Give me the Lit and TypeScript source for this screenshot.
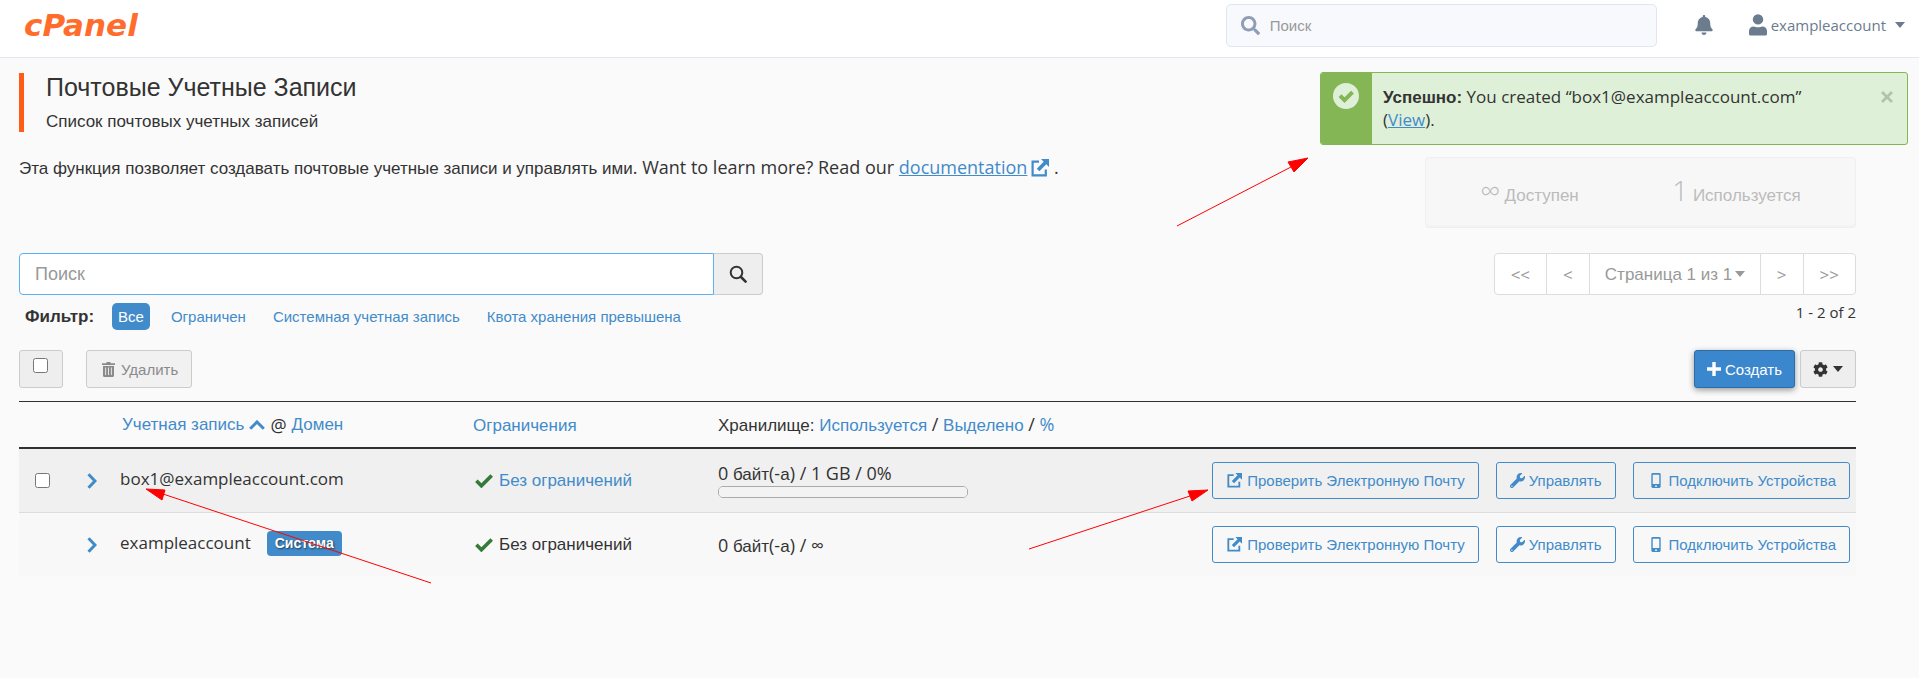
import { LitElement, html, css, svg, nothing, TemplateResult } from "lit";
import { customElement, property } from "lit/decorators.js";

interface Glyph {
  box: string;
  body: TemplateResult;
}

const solid = (box: string, d: string): Glyph => ({ box, body: svg`<path fill="currentColor" fill-rule="evenodd" d=${d} />` });

const GLYPHS: Record<string, Glyph> = {
  search: solid(
    "0 0 512 512",
    "M505 442.7L405.3 343c-4.5-4.5-10.6-7-17-7H372c27.6-35.3 44-79.7 44-128C416 93.1 322.9 0 208 0S0 93.1 0 208s93.1 208 208 208c48.3 0 92.7-16.4 128-44v16.3c0 6.4 2.5 12.5 7 17l99.7 99.7c9.4 9.4 24.6 9.4 33.9 0l28.3-28.3c9.4-9.4 9.4-24.6.1-34zM208 336c-70.7 0-128-57.2-128-128 0-70.7 57.2-128 128-128 70.7 0 128 57.2 128 128 0 70.7-57.2 128-128 128z"
  ),
  lens: {
    box: "0 0 18 18",
    body: svg`<circle cx="7.5" cy="7.5" r="5.8" fill="none" stroke="currentColor" stroke-width="2" /><path d="M12 12l4.6 4.6" stroke="currentColor" stroke-width="2.6" stroke-linecap="round" />`,
  },
  bell: solid(
    "0 0 448 512",
    "M224 512c35.32 0 63.97-28.65 63.97-64H160.03c0 35.35 28.65 64 63.97 64zm215.39-149.71c-19.32-20.76-55.47-51.99-55.47-154.29 0-77.7-54.48-139.9-127.94-155.16V32c0-17.67-14.32-32-31.98-32s-31.98 14.33-31.98 32v20.84C118.56 68.1 64.08 130.3 64.08 208c0 102.3-36.15 133.53-55.47 154.29-6 6.45-8.66 14.16-8.61 21.71.11 16.4 12.98 32 32.1 32h383.8c19.12 0 32-15.6 32.1-32 .05-7.55-2.61-15.27-8.61-21.71z"
  ),
  user: {
    box: "0 0 18 22",
    body: svg`<circle cx="9" cy="5.4" r="5.2" fill="currentColor" /><path fill="currentColor" d="M0 20V17a4.6 4.6 0 0 1 4.6-4.6c1.4 0 2.4.8 4.4.8s3-.8 4.4-.8A4.6 4.6 0 0 1 18 17v3a1.5 1.5 0 0 1-1.5 1.5h-15A1.5 1.5 0 0 1 0 20z" />`,
  },
  wrench: solid(
    "0 0 512 512",
    "M507.73 109.1c-2.24-9.03-13.54-12.09-20.12-5.51l-74.36 74.36-67.88-11.31-11.31-67.88 74.36-74.36c6.62-6.62 3.43-17.9-5.66-20.16-47.38-11.74-99.55.91-136.58 37.93-39.64 39.64-50.55 97.1-34.05 147.2L18.74 402.76c-24.99 24.99-24.99 65.51 0 90.5 24.99 24.99 65.51 24.99 90.5 0l213.21-213.21c50.12 16.71 107.47 5.68 147.37-34.22 37.07-37.07 49.7-89.32 37.91-136.73zM64 472c-13.25 0-24-10.75-24-24 0-13.26 10.75-24 24-24s24 10.74 24 24c0 13.25-10.75 24-24 24z"
  ),
  cog: solid(
    "0 0 512 512",
    "M487.4 315.7l-42.6-24.6c4.3-23.2 4.3-47 0-70.2l42.6-24.6c4.9-2.8 7.1-8.6 5.5-14-11.1-35.6-30-67.8-54.7-94.6-3.8-4.1-10-5.1-14.8-2.3L380.8 110c-17.9-15.4-38.5-27.3-60.8-35.1V25.8c0-5.6-3.9-10.5-9.4-11.7-36.7-8.2-74.3-7.8-109.2 0-5.5 1.2-9.4 6.1-9.4 11.7V75c-22.2 7.9-42.8 19.8-60.8 35.1L88.7 85.5c-4.9-2.8-11-1.9-14.8 2.3-24.7 26.7-43.6 58.9-54.7 94.6-1.7 5.4.6 11.2 5.5 14L67.3 221c-4.3 23.2-4.3 47 0 70.2l-42.6 24.6c-4.9 2.8-7.1 8.6-5.5 14 11.1 35.6 30 67.8 54.7 94.6 3.8 4.1 10 5.1 14.8 2.3l42.6-24.6c17.9 15.4 38.5 27.3 60.8 35.1v49.2c0 5.6 3.9 10.5 9.4 11.7 36.7 8.2 74.3 7.8 109.2 0 5.5-1.2 9.4-6.1 9.4-11.7v-49.2c22.2-7.9 42.8-19.8 60.8-35.1l42.6 24.6c4.9 2.8 11 1.9 14.8-2.3 24.7-26.7 43.6-58.9 54.7-94.6 1.5-5.5-.7-11.3-5.6-14.1zM256 336c-44.1 0-80-35.9-80-80s35.9-80 80-80 80 35.9 80 80-35.9 80-80 80z"
  ),
  external: {
    box: "0 0 18 18",
    body: svg`<path fill="none" stroke="currentColor" stroke-width="2.2" d="M8 2.6H1.6v13.8h13.2V10.5" /><path fill="currentColor" d="M10 0h8v8l-2.7-2.7-6.9 7-2.6-2.6 6.9-7z" />`,
  },
  phone: {
    box: "0 0 10 16",
    body: svg`<path fill="currentColor" fill-rule="evenodd" d="M1.5 0h7A1.5 1.5 0 0 1 10 1.5v13A1.5 1.5 0 0 1 8.5 16h-7A1.5 1.5 0 0 1 0 14.5v-13A1.5 1.5 0 0 1 1.5 0zM1.5 1.8v10h7v-10zM5 13a1 1 0 1 0 0 2 1 1 0 0 0 0-2z" />`,
  },
  trash: solid(
    "0 0 13 15",
    "M4.5 0h4v1.2H13V3H0V1.2h4.5zM1 4h11v9.5a1.5 1.5 0 0 1-1.5 1.5h-8A1.5 1.5 0 0 1 1 13.5zM3.2 5.5v7.5h.9V5.5zM6 5.5v7.5h.9V5.5zM8.9 5.5v7.5h.9V5.5z"
  ),
  plus: solid("0 0 14 14", "M5.3 0h3.4v5.3H14v3.4H8.7V14H5.3V8.7H0V5.3h5.3z"),
  caret: solid("0 0 10 6", "M0 0h10L5 6z"),
  right: { box: "0 0 10 16", body: svg`<path fill="none" stroke="currentColor" stroke-width="3" d="M1.5 1.2L8 8l-6.5 6.8" />` },
  up: { box: "0 0 16 10", body: svg`<path fill="none" stroke="#428bca" stroke-width="3" d="M1.2 8.7L8 2l6.8 6.7" />` },
  check: { box: "0 0 18 14", body: svg`<path fill="none" stroke="currentColor" stroke-width="3.6" d="M1.4 6.8l5 5L16.7 1.4" />` },
  cross: { box: "0 0 12 12", body: svg`<path fill="none" stroke="currentColor" stroke-width="2.8" d="M1 1l10 10M11 1L1 11" />` },
  success: {
    box: "0 0 26 26",
    body: svg`<circle cx="13" cy="13" r="13" fill="#dff0d8" /><path fill="none" stroke="#84b655" stroke-width="4" d="M7 12.6l4.5 4.5 8-8" />`,
  },
};

const icon = (name: string, width: number, height: number) =>
  html`<svg class="icon" aria-hidden="true" width=${width} height=${height} viewBox=${GLYPHS[name].box}>${GLYPHS[name].body}</svg>`;

const shared = css`
  * {
    box-sizing: border-box;
  }
  .icon {
    display: block;
    flex: none;
  }
  .cy {
    font-family: "Liberation Sans", Arial, sans-serif;
    font-size: 17px;
    line-height: 1;
  }
  a {
    color: #428bca;
    text-decoration: none;
  }
  button,
  input,
  select {
    font-family: "Liberation Sans", Arial, sans-serif;
    font-size: 15px;
    margin: 0;
  }
  input::placeholder {
    color: #999;
    opacity: 1;
  }
  input[type="checkbox"] {
    width: 15px;
    height: 15px;
    display: block;
  }
`;

@customElement("top-bar")
export class TopBar extends LitElement {
  static styles = [
    shared,
    css`
      :host {
        display: block;
      }
      .bar {
        display: flex;
        align-items: center;
        padding: 4px 14px 10px 24px;
        background: #fff;
        border-bottom: 1px solid #e4e7f1;
      }
      .logo {
        margin-right: auto;
        font: italic 700 31px/43px "DejaVu Sans", sans-serif;
        color: #ff6c2c;
      }
      .search {
        display: flex;
        align-items: center;
        gap: 10px;
        flex: 0 1 431px;
        height: 43px;
        padding: 0 12px 0 14px;
        border: 1px solid #e0e5f1;
        border-radius: 5px;
        background: #f7f9fd;
        color: #8f9db5;
      }
      .field {
        flex: 1;
        min-width: 0;
        border: 0;
        background: none;
        outline: none;
        padding: 0;
      }
      .plain {
        display: flex;
        align-items: center;
        border: 0;
        padding: 0 0 2px;
        background: none;
        color: #6b7c8f;
        font-family: "Open Sans", sans-serif;
      }
      .bell {
        margin: 0 36px 0 38px;
      }
      .account {
        gap: 4px;
      }
      .name {
        margin-right: 5px;
      }
    `,
  ];
  render() {
    return html`<header class="bar">
      <a class="logo" href="#">cPanel</a>
      <label class="search">${icon("search", 19, 19)}<input class="field" type="text" placeholder="Поиск" aria-label="Поиск" /></label>
      <button class="plain bell" aria-label="Уведомления">${icon("bell", 18, 20)}</button>
      <button class="plain account">${icon("user", 18, 22)}<span class="name">exampleaccount</span>${icon("caret", 10, 6)}</button>
    </header>`;
  }
}

@customElement("success-notice")
export class SuccessNotice extends LitElement {
  static styles = [
    shared,
    css`
      :host {
        display: flex;
        border: 1px solid #84b655;
        border-radius: 3px;
        background: #dff0d8;
        overflow: hidden;
      }
      .strip {
        width: 51px;
        padding: 10px 12px;
        background: #84b655;
      }
      .message {
        flex: 1;
        margin: 0;
        padding: 12px 11px 13px;
        font-size: 17px;
        line-height: 23px;
      }
      .message a {
        text-decoration: underline;
      }
      .title {
        font-weight: 700;
      }
      .close {
        align-self: flex-start;
        margin: 18px 14px 0 0;
        padding: 0;
        border: 0;
        background: none;
        color: #b3c2ad;
      }
    `,
  ];
  render() {
    return html`<div class="strip">${icon("success", 26, 26)}</div>
      <p class="message"><span class="cy title">Успешно:</span> You created “box1@exampleaccount.com”<br />(<a href="#">View</a>).</p>
      <button class="close" aria-label="Закрыть">${icon("cross", 12, 12)}</button>`;
  }
}

interface Account {
  name: string;
  system?: boolean;
  usage: TemplateResult;
  used?: number;
}

const ACCOUNTS: Account[] = [
  { name: "box1@exampleaccount.com", usage: html`0 <span class="cy">байт</span>(-<span class="cy">а</span>) / 1 GB / 0%`, used: 0 },
  { name: "exampleaccount", system: true, usage: html`0 <span class="cy">байт</span>(-<span class="cy">а</span>) / ∞` },
];

@customElement("account-table")
export class AccountTable extends LitElement {
  @property({ attribute: false }) accounts: Account[] = [];
  static styles = [
    shared,
    css`
      :host {
        display: block;
      }
      .list {
        width: 100%;
        table-layout: fixed;
        border-collapse: separate;
        border-spacing: 0;
        border-top: 1px solid #2f322f;
      }
      .c-check {
        width: 68px;
      }
      .c-open {
        width: 33px;
      }
      .c-name {
        width: 353px;
      }
      .c-limit {
        width: 245px;
      }
      .c-storage {
        width: 320px;
      }
      th,
      td {
        padding: 0;
        text-align: left;
        vertical-align: middle;
        font-weight: inherit;
        white-space: nowrap;
      }
      th {
        height: 47px;
        border-bottom: 2px solid #2f322f;
      }
      td {
        height: 63px;
        background: #f8f8f8;
      }
      .marked td {
        height: 64px;
        background: #f0f0f0;
        border-bottom: 1px solid #ddd;
      }
      .tick {
        padding-left: 16px;
      }
      .sort,
      .who,
      .limit {
        display: flex;
        align-items: center;
      }
      .who {
        padding-bottom: 3px;
        font-size: 17px;
      }
      .sort {
        gap: 5px;
        padding-left: 2px;
      }
      .limit {
        gap: 6px;
        padding-left: 2px;
      }
      .limit .icon {
        color: #357a38;
      }
      .open {
        display: block;
        padding: 0;
        border: 0;
        background: none;
        color: #428bca;
      }
      .badge {
        margin-left: 16px;
        padding: 0 8px;
        border-radius: 4px;
        background: #428bca;
        color: #fff;
        font: 700 14px/25px "Liberation Sans", Arial, sans-serif;
        text-shadow: 1px 1px 2px rgba(0, 0, 0, 0.6);
      }
      .storage {
        padding-bottom: 2px;
      }
      .usage {
        line-height: 20px;
      }
      .meter {
        display: block;
        width: 250px;
        height: 12px;
        margin-top: 3px;
        appearance: none;
        border: 1px solid #aaa;
        border-radius: 5px;
        background: #f3f3f3;
        overflow: hidden;
      }
      .meter::-webkit-progress-bar {
        background: #f3f3f3;
      }
      .meter::-webkit-progress-value {
        background: #428bca;
      }
      .actions {
        display: flex;
        justify-content: flex-end;
        gap: 17px;
        padding-right: 6px;
      }
      .action {
        display: flex;
        align-items: center;
        gap: 5px;
        height: 37px;
        padding: 0 13px 0 14px;
        border: 1px solid #428bca;
        border-radius: 3px;
        background: none;
        color: #428bca;
      }
      .action.tool {
        gap: 4px;
        padding: 0 13px;
      }
      .action.device {
        gap: 8px;
        padding: 0 13px 0 17px;
      }
    `,
  ];
  private row(a: Account) {
    return html`<tr class=${a.system ? "" : "marked"}>
      <td class="tick">${a.system ? nothing : html`<input type="checkbox" aria-label=${a.name} />`}</td>
      <td><button class="open" aria-label="Подробнее">${icon("right", 10, 16)}</button></td>
      <td><div class="who">${a.name}${a.system ? html`<span class="badge">Система</span>` : nothing}</div></td>
      <td>
        <div class="limit">
          ${icon("check", 18, 14)}${a.system ? html`<span class="cy">Без ограничений</span>` : html`<a class="cy" href="#">Без ограничений</a>`}
        </div>
      </td>
      <td>
        <div class="usage">${a.usage}</div>
        ${a.used === undefined ? nothing : html`<progress class="meter" max="100" value=${a.used} aria-label="Хранилище"></progress>`}
      </td>
      <td>
        <div class="actions">
          <button class="action">${icon("external", 15, 15)}Проверить Электронную Почту</button>
          <button class="action tool">${icon("wrench", 15, 15)}Управлять</button>
          <button class="action device">${icon("phone", 10, 15)}Подключить Устройства</button>
        </div>
      </td>
    </tr>`;
  }
  render() {
    return html`<table class="list">
      <colgroup>
        <col class="c-check" /><col class="c-open" /><col class="c-name" /><col class="c-limit" /><col class="c-storage" /><col />
      </colgroup>
      <thead>
        <tr>
          <th></th>
          <th></th>
          <th>
            <div class="sort"><a class="cy" href="#">Учетная запись</a>${icon("up", 16, 10)}<span>@</span><a class="cy" href="#">Домен</a></div>
          </th>
          <th class="storage"><a class="cy" href="#">Ограничения</a></th>
          <th class="storage">
            <span class="cy">Хранилище:</span> <a class="cy" href="#">Используется</a> / <a class="cy" href="#">Выделено</a> /
            <a href="#">%</a>
          </th>
          <th></th>
        </tr>
      </thead>
      <tbody>
        ${this.accounts.map((a) => this.row(a))}
      </tbody>
    </table>`;
  }
}

@customElement("app-root")
export class AppRoot extends LitElement {
  static styles = [
    shared,
    css`
      :host {
        display: block;
        position: relative;
        min-height: 100vh;
        background: #fafafa;
        color: #333;
        font: 400 18px/24px "Open Sans", "Liberation Sans", sans-serif;
      }
      .page {
        padding: 15px 63px 0 19px;
      }
      .notice {
        position: absolute;
        top: 72px;
        right: 11px;
        width: 588px;
      }
      .heading {
        display: flex;
        flex-direction: column;
        gap: 10px;
        padding-left: 22px;
        border-left: 5px solid #ff5c16;
      }
      .title {
        margin: 0;
        font: 400 25px/28px "Liberation Sans", Arial, sans-serif;
      }
      .subtitle {
        margin: 0;
        line-height: 21px;
      }
      .intro {
        display: flex;
        justify-content: space-between;
        align-items: flex-start;
        margin-top: 25px;
      }
      .about {
        margin: 0;
        line-height: 20px;
      }
      .doc {
        text-decoration: underline;
      }
      .out {
        display: inline-block;
        margin-left: 4px;
        vertical-align: -3px;
        color: #428bca;
      }
      .stats {
        display: flex;
        width: 431px;
        height: 71px;
        padding: 17px 15px 0 0;
        border: 1px solid #efefef;
        border-radius: 4px;
        background: #f7f7f7;
        box-shadow: inset 0 -2px 0 #f3f3f3;
        color: #bbb;
      }
      .stat {
        flex: 1;
        text-align: center;
        line-height: 38px;
      }
      .stat .cy {
        font-size: 17px;
      }
      .count {
        font-size: 28px;
        font-weight: 300;
        line-height: 1;
      }
      .filters {
        display: flex;
        justify-content: space-between;
        align-items: flex-start;
        gap: 24px;
        margin-top: 25px;
      }
      .find {
        flex: 0 1 744px;
      }
      .group {
        display: flex;
        height: 42px;
      }
      .query {
        flex: 1;
        min-width: 0;
        padding: 0 15px;
        border: 1px solid #5fb0f0;
        border-radius: 4px 0 0 4px;
        background: #fff;
        outline: none;
        font-size: 18px;
      }
      .go {
        display: flex;
        align-items: center;
        justify-content: center;
        width: 49px;
        padding: 0;
        border: 1px solid #ccc;
        border-left: 0;
        border-radius: 0 4px 4px 0;
        background: #eee;
        color: #333;
      }
      .tags {
        display: flex;
        align-items: center;
        gap: 15px;
        margin-top: 8px;
        padding-left: 6px;
      }
      .tags-label {
        margin-right: 3px;
        font-weight: 700;
      }
      .tag {
        padding: 0 6px;
        border-radius: 5px;
        font-size: 15px;
        line-height: 27px;
      }
      .tag.on {
        background: #428bca;
        color: #fff;
      }
      .pager {
        display: flex;
        height: 42px;
        border: 1px solid #ddd;
        border-radius: 4px;
        background: #fff;
        color: #999;
      }
      .step {
        padding: 0 16px;
        border: 0;
        border-right: 1px solid #ddd;
        background: none;
        color: #999;
        font: 400 17px "Open Sans", sans-serif;
      }
      .step.last {
        border-right: 0;
      }
      .picker {
        display: flex;
        align-items: center;
        padding: 0 15px;
        border-right: 1px solid #ddd;
      }
      .pages {
        appearance: none;
        border: 0;
        padding: 0 2px 0 0;
        background: none;
        color: #999;
        font-size: 17px;
      }
      .range {
        margin: 7px 0 0;
        text-align: right;
        font-size: 15px;
        line-height: 20px;
      }
      .toolbar {
        display: flex;
        margin: 20px 0 13px;
      }
      .tool {
        display: flex;
        align-items: center;
        height: 38px;
        padding: 0 12px;
        border: 1px solid #ccc;
        border-radius: 3px;
        background: #eee;
        color: #333;
      }
      .all {
        align-items: flex-start;
        padding: 7px 14px 0 13px;
      }
      .remove {
        gap: 6px;
        margin: 0 auto 0 23px;
        padding: 0 13px 0 15px;
        background: #f1f1f1;
        color: #8a8a8a;
      }
      .create {
        gap: 4px;
        margin-right: 5px;
        border-color: #2d6ca8;
        background: #3a87cd;
        color: #fff;
        box-shadow: 0 2px 6px rgba(0, 0, 0, 0.4);
      }
      .settings {
        gap: 5px;
      }
      .marks {
        position: absolute;
        top: 0;
        left: 0;
        pointer-events: none;
      }
    `,
  ];
  render() {
    return html`
      <top-bar></top-bar>
      <main class="page">
        <div class="heading">
          <h1 class="title">Почтовые Учетные Записи</h1>
          <p class="cy subtitle">Список почтовых учетных записей</p>
        </div>
        <div class="intro">
          <p class="about">
            <span class="cy">Эта функция позволяет создавать почтовые учетные записи и управлять ими</span>. Want to learn more? Read our
            <a class="doc" href="#">documentation</a><span class="out">${icon("external", 18, 18)}</span> .
          </p>
          <div class="stats">
            <div class="stat"><span class="count">∞</span> <span class="cy">Доступен</span></div>
            <div class="stat"><span class="count">1</span> <span class="cy">Используется</span></div>
          </div>
        </div>
        <div class="filters">
          <div class="find">
            <div class="group">
              <input class="query" type="text" placeholder="Поиск" aria-label="Поиск" />
              <button class="go" aria-label="Найти">${icon("lens", 18, 18)}</button>
            </div>
            <div class="tags">
              <span class="cy tags-label">Фильтр:</span>
              <a class="cy tag on" href="#">Все</a>
              <a class="cy tag" href="#">Ограничен</a>
              <a class="cy tag" href="#">Системная учетная запись</a>
              <a class="cy tag" href="#">Квота хранения превышена</a>
            </div>
          </div>
          <div>
            <div class="pager">
              <button class="step">&lt;&lt;</button>
              <button class="step">&lt;</button>
              <label class="picker">
                <select class="pages" aria-label="Страница">
                  <option>Страница 1 из 1</option>
                </select>
                ${icon("caret", 10, 6)}
              </label>
              <button class="step">&gt;</button>
              <button class="step last">&gt;&gt;</button>
            </div>
            <p class="range">1 - 2 of 2</p>
          </div>
        </div>
        <div class="toolbar">
          <label class="tool all"><input type="checkbox" aria-label="Выбрать все" /></label>
          <button class="tool remove">${icon("trash", 13, 15)}Удалить</button>
          <button class="tool create">${icon("plus", 14, 14)}Создать</button>
          <button class="tool settings" aria-label="Настройки">${icon("cog", 15, 15)}${icon("caret", 10, 6)}</button>
        </div>
        <account-table .accounts=${ACCOUNTS}></account-table>
      </main>
      <success-notice class="notice"></success-notice>
      <svg class="marks" width="1320" height="600" aria-hidden="true">
        <g stroke="#f00" stroke-width="1" fill="#f00">
          <path d="M1177 226L1291 167M431 583L163 494M1029 549L1190 496" />
          <path d="M1308 158L1288 162L1294 172ZM146 489L165 490L162 500ZM1208 490L1188 491L1192 501Z" />
        </g>
      </svg>
    `;
  }
}
